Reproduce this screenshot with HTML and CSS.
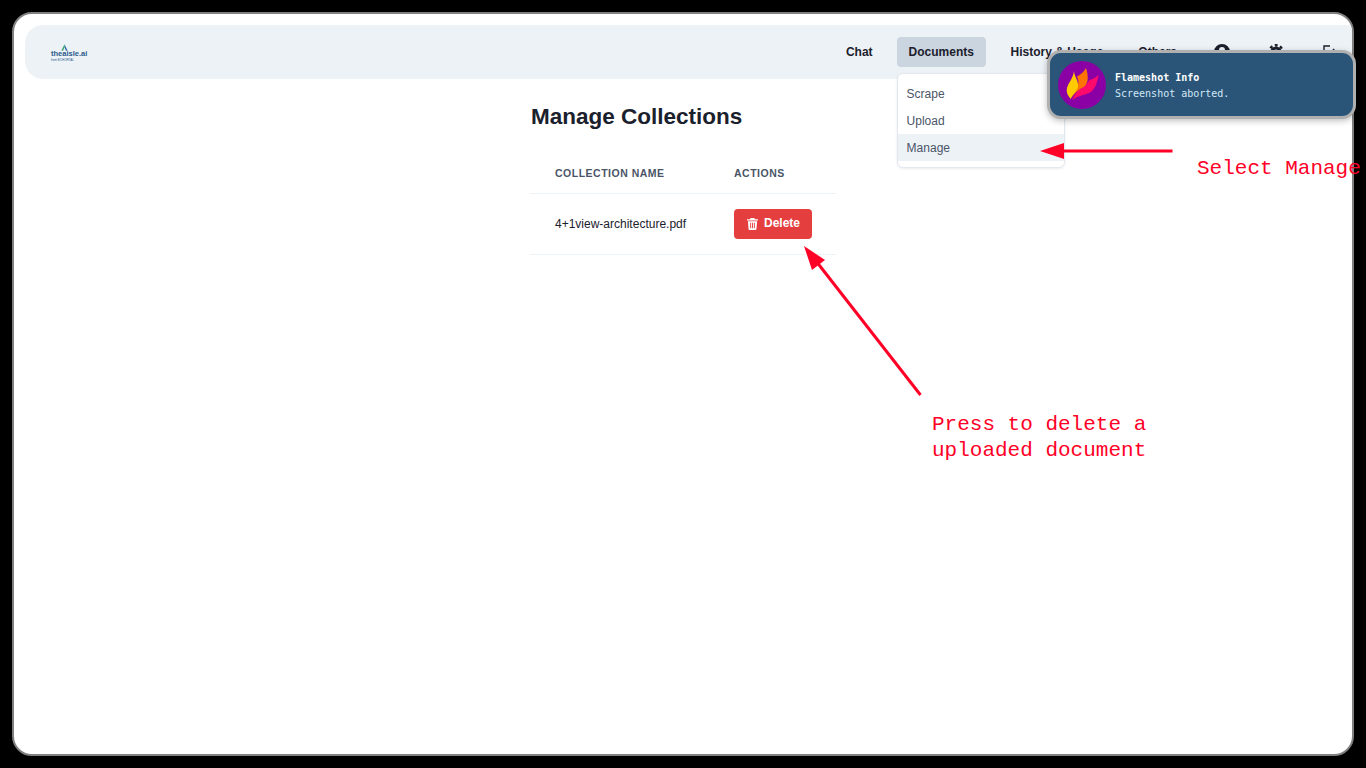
FILE: index.html
```html
<!DOCTYPE html>
<html lang="en">
<head>
    <meta charset="UTF-8">
    <meta name="viewport" content="width=device-width, initial-scale=1.0">
    <title>Manage Collections</title>
    <link rel="stylesheet" href="styles.css">
</head>
<body>
<div class="window">
    <nav class="navbar">
        <a class="logo" href="#">
            <svg class="logo-mark" viewBox="0 0 10 7" width="9" height="7">
                <path d="M5 0 L8.5 7 H6.6 L5 3.2 Z" fill="#2b6cb0"/>
                <path d="M5 0 L1.5 7 H3.4 L5 3.2 Z" fill="#38a169"/>
            </svg>
            <span class="logo-name">theaisle.ai</span>
            <span class="logo-sub">from ECHORTAL</span>
        </a>
        <div class="nav-links">
            <a class="nav-link" href="#">Chat</a>
            <div class="nav-item">
                <a class="nav-link active" href="#">Documents</a>
                <div class="dropdown">
                    <a class="dropdown-item" href="#">Scrape</a>
                    <a class="dropdown-item" href="#">Upload</a>
                    <a class="dropdown-item selected" href="#">Manage</a>
                </div>
            </div>
            <a class="nav-link history" href="#">History &amp; Usage</a>
            <a class="nav-link others" href="#">Others</a>
            <a class="nav-icon" href="#">
                <svg viewBox="0 0 16 16" width="16" height="16" fill="#1a202c">
                    <path fill-rule="evenodd" d="M8 0a8 8 0 1 1 0 16A8 8 0 0 1 8 0zm0 3a3 3 0 1 0 0 6 3 3 0 0 0 0-6z"/>
                </svg>
            </a>
            <a class="nav-icon" href="#">
                <svg viewBox="0 0 16 16" width="16" height="16" fill="none" stroke="#1a202c">
                    <circle cx="8" cy="8" r="4" stroke-width="3.200"/>
                    <circle cx="8" cy="8" r="6.750" stroke-width="2.500" stroke-dasharray="2.800 2.502" stroke-dashoffset="1.400"/>
                </svg>
            </a>
            <a class="nav-icon" href="#">
                <svg viewBox="0 0 16 16" width="16" height="16" fill="none" stroke="#1a202c" stroke-width="1.400">
                    <path d="M8 2 H2 V14 H8 M6 8 H14 M11 5 L14 8 L11 11"/>
                </svg>
            </a>
        </div>
    </nav>

    <main class="content">
        <h1 class="page-title">Manage Collections</h1>
        <table class="collections">
            <thead>
                <tr>
                    <th class="col-name">Collection Name</th>
                    <th>Actions</th>
                </tr>
            </thead>
            <tbody>
                <tr>
                    <td class="col-name">4+1view-architecture.pdf</td>
                    <td>
                        <button class="delete-btn" type="button">
                            <svg viewBox="0 0 12 13" width="11" height="12" fill="#ffffff">
                                <path fill-rule="evenodd" d="M4 0h4l.6 1.300H12v1.500H0V1.300h3.400zM1 3.600h10l-.7 8.400a1 1 0 0 1-1 1H2.700a1 1 0 0 1-1-1zM3.500 5v6h1V5zm2 0v6h1V5zm2 0v6h1V5z"/>
                            </svg>
                            <span>Delete</span>
                        </button>
                    </td>
                </tr>
            </tbody>
        </table>
    </main>
</div>

<!-- screenshot annotations drawn on top of the page -->
<svg class="arrows" viewBox="0 0 1366 768" width="1366" height="768">
    <path d="M1172.500 151 H1060" stroke="#ff0027" stroke-width="3" fill="none"/>
    <path d="M1040 151 L1064 143 V159 Z" fill="#ff0027"/>
    <path d="M920.500 395 L816 261" stroke="#ff0027" stroke-width="3" fill="none"/>
    <path d="M804 246 L825 260 L812 270 Z" fill="#ff0027"/>
</svg>
<div class="note note-manage">Select Manage</div>
<div class="note note-delete">Press to delete a<br>uploaded document</div>

<div class="toast">
    <svg class="toast-icon" viewBox="0 0 48 48" width="48" height="48">
        <circle cx="24" cy="24" r="24" fill="#8a00a5"/>
        <path d="M40.500 14 C39 22 37 29 31 32 C25 34.500 19 35 14.500 39 C17 31 23 27 27 25 C29 23 30 21 31.500 19 C34 18.500 37 17 40.500 14 Z" fill="#ff0a6c"/>
        <path d="M28 7 C26 11 22 14 19 15.500 C21 20 21 24 18 28 C16 31 14.500 34 13.500 37 C17 31 22 28 27 25 C31 21 30 13 28 7 Z" fill="#ff7400"/>
        <path d="M16 10 C16 15 21 20 20 26 C19 30 15 33 12.700 38 C10 35 8 31 9 27 C10 22 15 18 16 10 Z" fill="#ffcb00"/>
    </svg>
    <div class="toast-text">
        <div class="toast-title">Flameshot Info</div>
        <div class="toast-msg">Screenshot aborted.</div>
    </div>
</div>
</body>
</html>
```

FILE: styles.css
```css
* {
    box-sizing: border-box;
}

body {
    position: relative;
    width: 1366px;
    height: 768px;
    margin: 0;
    padding: 12px;
    overflow: hidden;
    background-color: #000000;
    font-family: "Liberation Sans", Arial, sans-serif;
    color: #1a202c;
}

a {
    color: inherit;
    text-decoration: none;
}

.window {
    height: 744px;
    border: 2px solid #808080;
    border-radius: 20px;
    background-color: #ffffff;
    overflow: hidden;
}

/* navbar */
.navbar {
    display: flex;
    align-items: center;
    justify-content: space-between;
    height: 54px;
    margin: 11px 0 0 11px;
    padding: 0 1px 0 26px;
    border-radius: 18px 0 0 18px;
    background-color: #edf2f7;
}

.logo {
    display: flex;
    flex-direction: column;
    align-items: flex-start;
    width: 36px;
    margin-top: 1px;
    color: #2a5a8c;
}

.logo-mark {
    display: block;
    margin: 0 0 -1px 9px;
}

.logo-name {
    font-size: 7.500px;
    font-weight: bold;
    line-height: 8px;
    white-space: nowrap;
}

.logo-sub {
    font-size: 3px;
    line-height: 4px;
    white-space: nowrap;
}

.nav-links {
    display: flex;
    align-items: center;
    gap: 12px;
}

.nav-item {
    position: relative;
}

.nav-link {
    display: block;
    height: 30px;
    padding: 0 12px;
    border-radius: 4px;
    font-size: 12px;
    font-weight: bold;
    line-height: 30px;
    white-space: nowrap;
}

.nav-link.active {
    width: 89px;
    background-color: #cbd5e0;
}

.nav-link.history {
    margin-left: 1px;
}

.nav-link.others {
    margin-left: -1px;
}

.nav-icon {
    display: flex;
    align-items: center;
    justify-content: center;
    width: 42px;
    height: 30px;
}

/* documents menu */
.dropdown {
    position: absolute;
    top: 36px;
    left: 0;
    width: 168px;
    padding: 6px 0;
    border: 1px solid #e2e8f0;
    border-radius: 6px;
    background-color: #ffffff;
    box-shadow: 0 1px 3px rgba(0, 0, 0, 0.08);
}

.dropdown-item {
    display: block;
    height: 27px;
    padding: 1px 9px 0;
    font-size: 12px;
    line-height: 27px;
    color: #4a5568;
}

.dropdown-item.selected {
    background-color: #edf2f7;
}

/* collections table */
.content {
    width: 306px;
    margin: 0 auto;
}

.page-title {
    margin: 24px 0 22px 1px;
    font-size: 22.500px;
    font-weight: bold;
    line-height: 28px;
    white-space: nowrap;
}

.collections {
    width: 100%;
    border-collapse: collapse;
    table-layout: fixed;
}

.collections th {
    height: 40px;
    padding: 0 0 0 24px;
    border-bottom: 1px solid #edf2f7;
    font-size: 10.500px;
    font-weight: bold;
    letter-spacing: 0.5px;
    text-align: left;
    text-transform: uppercase;
    color: #4a5568;
}

.collections td {
    height: 61px;
    padding: 0 0 0 24px;
    border-bottom: 1px solid #edf2f7;
    font-size: 12px;
}

.collections .col-name {
    width: 180px;
    padding-left: 25px;
}

.delete-btn {
    display: flex;
    align-items: center;
    gap: 6px;
    width: 78px;
    height: 30px;
    padding: 0 0 0 13px;
    border: none;
    border-radius: 4px;
    background-color: #e53e3e;
    font-family: inherit;
    font-size: 12px;
    font-weight: bold;
    color: #ffffff;
}

.delete-btn span {
    margin-top: -2px;
}

/* annotations */
.arrows {
    position: absolute;
    top: 0;
    left: 0;
}

.note {
    position: absolute;
    font-family: "Liberation Mono", monospace;
    font-size: 21px;
    line-height: 26px;
    white-space: nowrap;
    color: #ff0027;
}

.note-manage {
    top: 156px;
    left: 1197px;
}

.note-delete {
    top: 412px;
    left: 932px;
}

/* flameshot notification */
.toast {
    position: absolute;
    top: 50px;
    left: 1047px;
    display: flex;
    align-items: center;
    gap: 9px;
    width: 309px;
    height: 69px;
    padding-left: 8px;
    border: 3px solid #b0b0b0;
    border-radius: 14px;
    background-color: #2a5578;
    box-shadow: 0 2px 6px rgba(0, 0, 0, 0.25);
}

.toast-text {
    margin-top: 2px;
    font-family: "DejaVu Sans Mono", monospace;
    font-size: 10px;
    line-height: 16px;
    color: #d3e8f8;
}

.toast-title {
    font-weight: bold;
    color: #ffffff;
}
```
